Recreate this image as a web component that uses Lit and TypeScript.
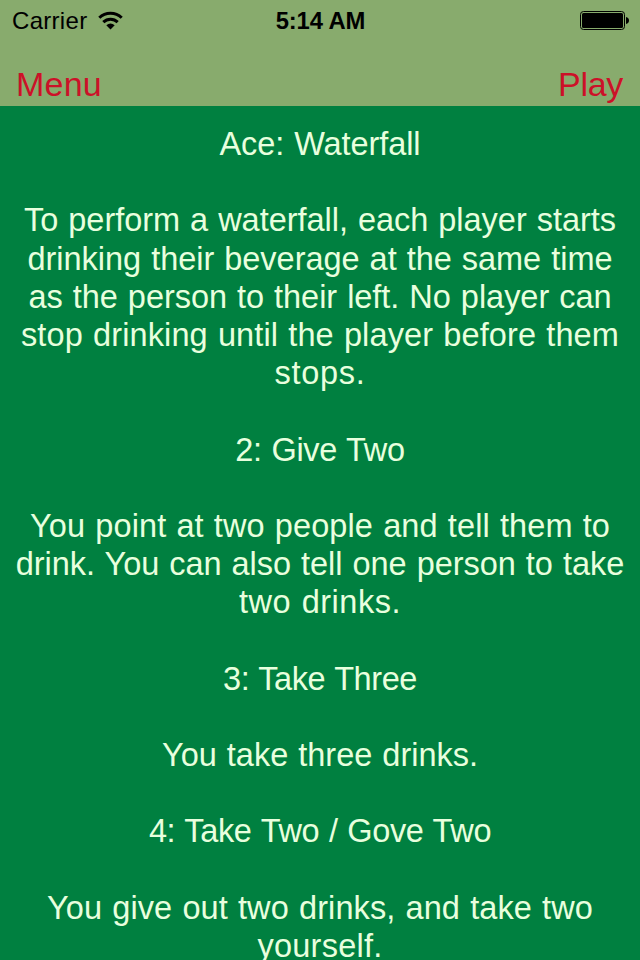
import { LitElement, html, css } from "lit";
import { customElement } from "lit/decorators.js";

interface Line { text: string; width: number; }

const lines: (Line | null)[] = [
  { text: "Ace: Waterfall", width: 201 },
  null,
  { text: "To perform a waterfall, each player starts", width: 592 },
  { text: "drinking their beverage at the same time", width: 585 },
  { text: "as the person to their left. No player can", width: 583 },
  { text: "stop drinking until the player before them", width: 598 },
  { text: "stops.", width: 91 },
  null,
  { text: "2: Give Two", width: 170 },
  null,
  { text: "You point at two people and tell them to", width: 580 },
  { text: "drink. You can also tell one person to take", width: 609 },
  { text: "two drinks.", width: 162 },
  null,
  { text: "3: Take Three", width: 195 },
  null,
  { text: "You take three drinks.", width: 316 },
  null,
  { text: "4: Take Two / Gove Two", width: 344 },
  null,
  { text: "You give out two drinks, and take two", width: 546 },
  { text: "yourself.", width: 125 },
];

const WORD_GAP = 1;
const FONT = '32.5px "Liberation Sans"';
const ctx = document.createElement("canvas").getContext("2d")!;

// Tracking that sets a line to its full measure.
function tracking(line: Line): string {
  ctx.font = FONT;
  const gaps = (line.text.split(" ").length - 1) * WORD_GAP;
  const natural = ctx.measureText(line.text).width + gaps;
  return ((line.width - natural) / line.text.length).toFixed(3) + "px";
}

@customElement("app-root")
export class AppRoot extends LitElement {
  static styles = css`
    :host { display: flex; flex-direction: column; width: 640px; height: 960px; overflow: hidden; background: #008040; font-family: "Liberation Sans", Arial, sans-serif; }
    .header { height: 106px; flex: none; background: #88ab6d; }
    .status { height: 42px; display: grid; grid-template-columns: 1fr auto 1fr; align-items: center; padding: 0 11px 0 12px; color: #000; font-size: 24px; box-sizing: border-box; }
    .carrier { display: flex; align-items: center; gap: 11px; letter-spacing: 0.3px; }
    .wifi { display: block; margin-bottom: 1px; }
    .time { font-weight: 700; font-size: 23.8px; letter-spacing: -0.1px; }
    .battery { justify-self: end; display: block; }
    .nav { height: 64px; display: flex; justify-content: space-between; padding: 22px 17px 0 16px; box-sizing: border-box; color: #cc1128; font-size: 34px; line-height: 40px; }
    .play { letter-spacing: -0.3px; }
    .menu { letter-spacing: 0.2px; }
    .rules { padding-top: 19px; color: #e8ffde; font-size: 32.5px; text-align: center; word-spacing: 1px; }
    .line { height: 38.2px; line-height: 38.2px; white-space: nowrap; }
  `;
  render() {
    return html`
      <div class="header">
        <div class="status">
          <div class="carrier"><span>Carrier</span>
            <svg class="wifi" width="25" height="19" viewBox="0 0 25 19"><path d="M1.3 6.7a16 16 0 0 1 22.4 0M5.3 11.1a10.3 10.3 0 0 1 14.4 0" fill="none" stroke="#000" stroke-width="3"/><path d="M8.3 14.3q4.2-3.6 8.4 0L12.5 18.5z"/></svg>
          </div>
          <span class="time">5:14 AM</span>
          <svg class="battery" width="49" height="20" viewBox="0 0 49 20"><rect x=".5" y=".5" width="44" height="18" rx="3" fill="none" stroke="#000"/><rect x="2" y="2" width="41" height="15" rx="1.5"/><path d="M46 6q3 .8 3 3.5t-3 3.5z"/></svg>
        </div>
        <div class="nav"><span class="menu">Menu</span><span class="play">Play</span></div>
      </div>
      <div class="rules">
        ${lines.map((l) => l
          ? html`<div class="line" style="letter-spacing:${tracking(l)}">${l.text}</div>`
          : html`<div class="line"></div>`)}
      </div>`;
  }
}
